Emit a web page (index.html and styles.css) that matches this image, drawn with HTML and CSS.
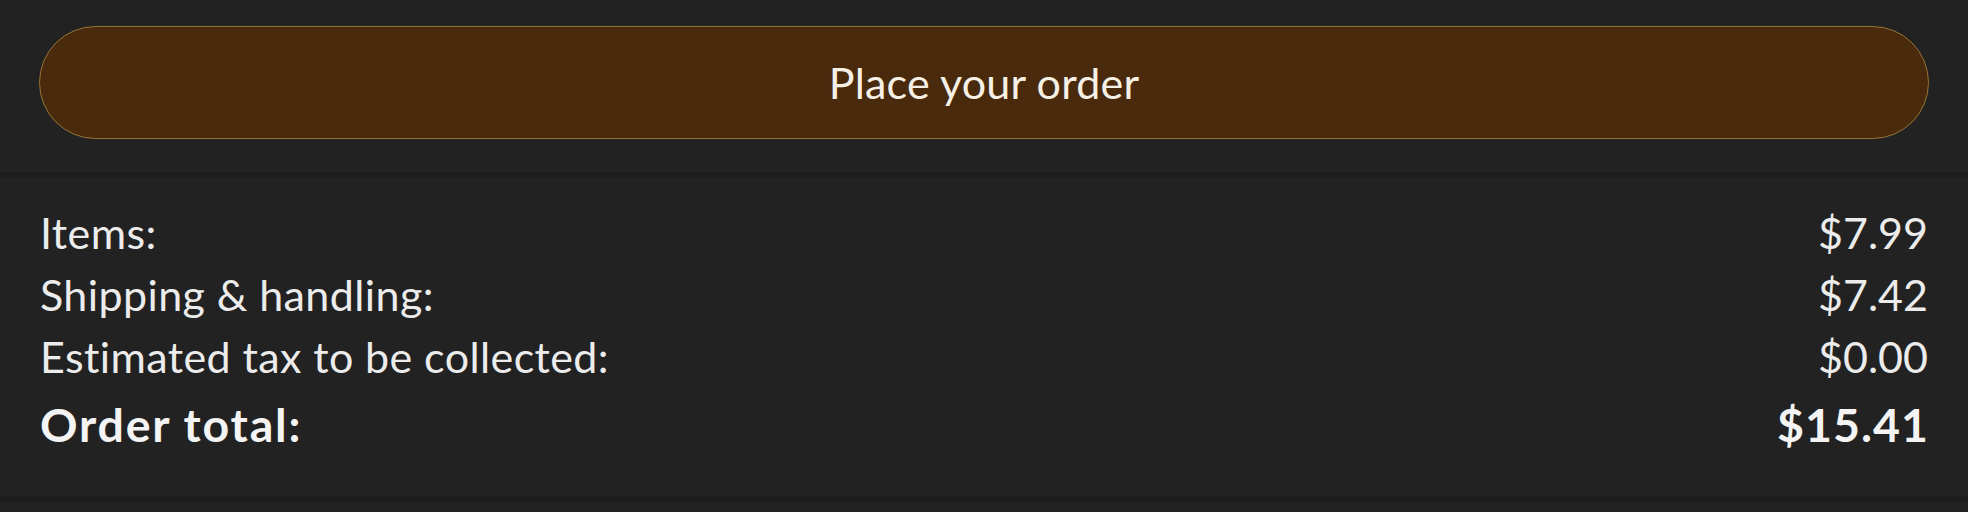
FILE: index.html
```html
<!DOCTYPE html>
<html lang="en">
<head>
<meta charset="utf-8">
<title>Place your order</title>
<link rel="stylesheet" href="styles.css">
</head>
<body>
<div class="checkout">
  <section class="action">
    <button class="place-order" type="button">Place your order</button>
  </section>
  <section class="summary">
    <div class="row"><span>Items:</span><span class="amount">$7.99</span></div>
    <div class="row"><span>Shipping &amp; handling:</span><span class="amount">$7.42</span></div>
    <div class="row"><span>Estimated tax to be collected:</span><span class="amount">$0.00</span></div>
    <div class="row total"><span>Order total:</span><span class="amount">$15.41</span></div>
  </section>
  <div class="tail"></div>
</div>
</body>
</html>
```
FILE: styles.css
```css
html, body {
  margin: 0;
  padding: 0;
  background: #222222;
}
body {
  font-family: "Lato", "Noto Sans", sans-serif;
  color: #ececec;
}
.checkout {
  display: flex;
  flex-direction: column;
}
.action {
  padding: 26px 39px 33px 39px;
  border-bottom: 5px solid #1c1e1e;
}
.place-order {
  display: block;
  width: 100%;
  height: 113px;
  border: 1.5px solid #967538;
  border-radius: 57px;
  background: #4a2a0c;
  color: #f6f0e6;
  font-family: "Lato", "Noto Sans", sans-serif;
  font-size: 43px;
  letter-spacing: 0.2px;
  padding: 0;
}
.summary {
  display: flex;
  flex-direction: column;
  padding: 25px 40px 37px 40px;
  border-bottom: 5px solid #1c1e1e;
}
.row {
  display: flex;
  justify-content: space-between;
  font-size: 43px;
  line-height: 62px;
  letter-spacing: 0.4px;
}
.row .amount {
  letter-spacing: 0;
}
.row.total {
  font-weight: 700;
  font-size: 46.5px;
  line-height: 72px;
  letter-spacing: 1.8px;
  color: #f4f4f4;
}
.row.total .amount {
  letter-spacing: 1px;
  margin-right: -1px;
}
.tail {
  height: 10px;
}
```
